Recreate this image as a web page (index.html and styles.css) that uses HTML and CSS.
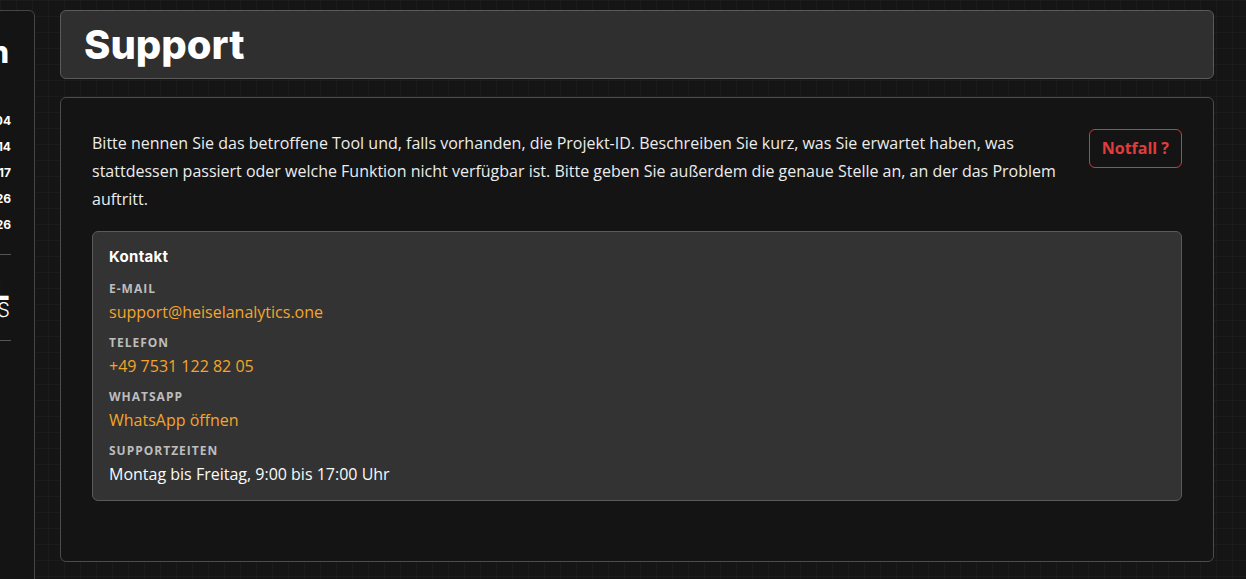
FILE: index.html
```html
<!DOCTYPE html>
<html lang="de">
<head>
<meta charset="utf-8">
<title>Support</title>
<link rel="stylesheet" href="styles.css">
</head>
<body>
<div class="app">
  <aside class="sidebar">
    <div class="side-title">Navigation</div>
    <ul class="side-stats">
      <li>Stand 12.04</li>
      <li>Tools 14</li>
      <li>Projekte 17</li>
      <li>Version 2026</li>
      <li>Lizenz 2026</li>
    </ul>
    <hr class="side-rule">
    <div class="logo">
      <span class="logo-top">HEISEL</span>
      <span class="logo-bottom">ANALYTICS</span>
    </div>
    <hr class="side-rule">
  </aside>

  <main class="main">
    <header class="page-head">
      <h1>Support</h1>
    </header>

    <section class="card">
      <div class="intro">
        <p>Bitte nennen Sie das betroffene Tool und, falls vorhanden, die Projekt-ID. Beschreiben Sie kurz, was Sie erwartet haben, was stattdessen passiert oder welche Funktion nicht verfügbar ist. Bitte geben Sie außerdem die genaue Stelle an, an der das Problem auftritt.</p>
        <button class="btn-emergency" type="button">Notfall ?</button>
      </div>

      <div class="contact">
        <h2>Kontakt</h2>
        <div class="contact-item">
          <div class="label">E-Mail</div>
          <a class="value link" href="#">support@heiselanalytics.one</a>
        </div>
        <div class="contact-item">
          <div class="label">Telefon</div>
          <a class="value link" href="#">+49 7531 122 82 05</a>
        </div>
        <div class="contact-item">
          <div class="label">WhatsApp</div>
          <a class="value link" href="#">WhatsApp öffnen</a>
        </div>
        <div class="contact-item">
          <div class="label">Supportzeiten</div>
          <div class="value">Montag bis Freitag, 9:00 bis 17:00 Uhr</div>
        </div>
      </div>
    </section>
  </main>
</div>
</body>
</html>
```

FILE: styles.css
```css
* { box-sizing: border-box; }

html, body {
  margin: 0;
  height: 100%;
  overflow: hidden;
}

body {
  background-color: #151515;
  background-image:
    linear-gradient(rgba(255,255,255,0.022) 1px, transparent 1px),
    linear-gradient(90deg, rgba(255,255,255,0.022) 1px, transparent 1px);
  background-size: 16px 16px;
  color: #ececec;
  font-family: "Open Sans", "Liberation Sans", sans-serif;
}

.app {
  display: flex;
  align-items: flex-start;
  gap: 25px;
  padding: 10px 32px 0 0;
}

/* Sidebar (mostly off-screen to the left) */
.sidebar {
  flex: 0 0 240px;
  margin-left: -205px;
  height: 640px;
  background: #141414;
  border: 1px solid #454545;
  border-radius: 6px;
  padding: 23px 23px 0 0;
  text-align: right;
  overflow: hidden;
}

.side-title {
  font-family: "Inter", "DejaVu Sans", sans-serif;
  font-weight: 800;
  font-size: 30px;
  line-height: 36px;
  color: #fff;
  white-space: nowrap;
  margin-right: 2px;
}

.side-stats {
  list-style: none;
  margin: 38px 0 0;
  padding: 0;
}

.side-stats li {
  font-family: "Inter", "DejaVu Sans", sans-serif;
  font-weight: 700;
  font-size: 12px;
  line-height: 26px;
  color: #fff;
  white-space: nowrap;
}

.side-rule {
  border: 0;
  border-top: 1px solid #555;
  margin: 16px 0 0;
}

.logo {
  display: flex;
  flex-direction: column;
  align-items: flex-end;
  margin-top: 22px;
  margin-bottom: 22px;
  color: #fff;
  font-family: "Inter", "DejaVu Sans", sans-serif;
}

.logo-top {
  font-weight: 800;
  font-size: 30px;
  line-height: 25px;
  margin-right: 2px;
  letter-spacing: -0.5px;
  white-space: nowrap;
}

.logo-bottom {
  font-weight: 300;
  font-size: 20px;
  line-height: 16px;
  margin-right: 1px;
  white-space: nowrap;
}

/* Main column */
.main {
  flex: 1 1 auto;
  display: flex;
  flex-direction: column;
  gap: 18px;
  min-width: 0;
}

.page-head {
  background: #2f2f2f;
  border: 1px solid #5a5a5a;
  border-radius: 6px;
  height: 69px;
  padding: 0 23px;
  display: flex;
  align-items: center;
}

.page-head h1 {
  margin: 0;
  font-family: "Inter", "DejaVu Sans", sans-serif;
  font-weight: 800;
  font-size: 40px;
  line-height: 1;
  color: #fff;
}

.card {
  background: #141414;
  border: 1px solid #4c4c4c;
  border-radius: 6px;
  padding: 31px 31px 60px;
}

.intro {
  display: flex;
  align-items: flex-start;
  gap: 24px;
}

.intro p {
  flex: 1 1 auto;
  margin: 0;
  font-size: 16px;
  line-height: 28px;
  color: #ececec;
}

.btn-emergency {
  flex: 0 0 auto;
  background: transparent;
  border: 1px solid #d23a3a;
  border-radius: 6px;
  color: #e03c3c;
  font-family: "Open Sans", "Liberation Sans", sans-serif;
  font-weight: 700;
  font-size: 16px;
  line-height: 21px;
  padding: 8px 12px;
  cursor: pointer;
}

.contact {
  margin-top: 18px;
  background: #333333;
  border: 1px solid #5a5a5a;
  border-radius: 6px;
  padding: 16px 16px 14px;
}

.contact h2 {
  margin: 0 0 15px;
  font-family: "Inter", "DejaVu Sans", sans-serif;
  font-weight: 700;
  font-size: 15px;
  line-height: 18px;
  letter-spacing: 0.3px;
  color: #fff;
}

.contact-item + .contact-item {
  margin-top: 11px;
}

.label {
  font-size: 12px;
  font-weight: 700;
  line-height: 16px;
  letter-spacing: 1px;
  text-transform: uppercase;
  color: #bdbdbd;
  margin-bottom: 3px;
}

.value {
  display: block;
  font-size: 16px;
  line-height: 24px;
  color: #fafafa;
}

.link {
  color: #f4a52b;
  text-decoration: none;
}
```
